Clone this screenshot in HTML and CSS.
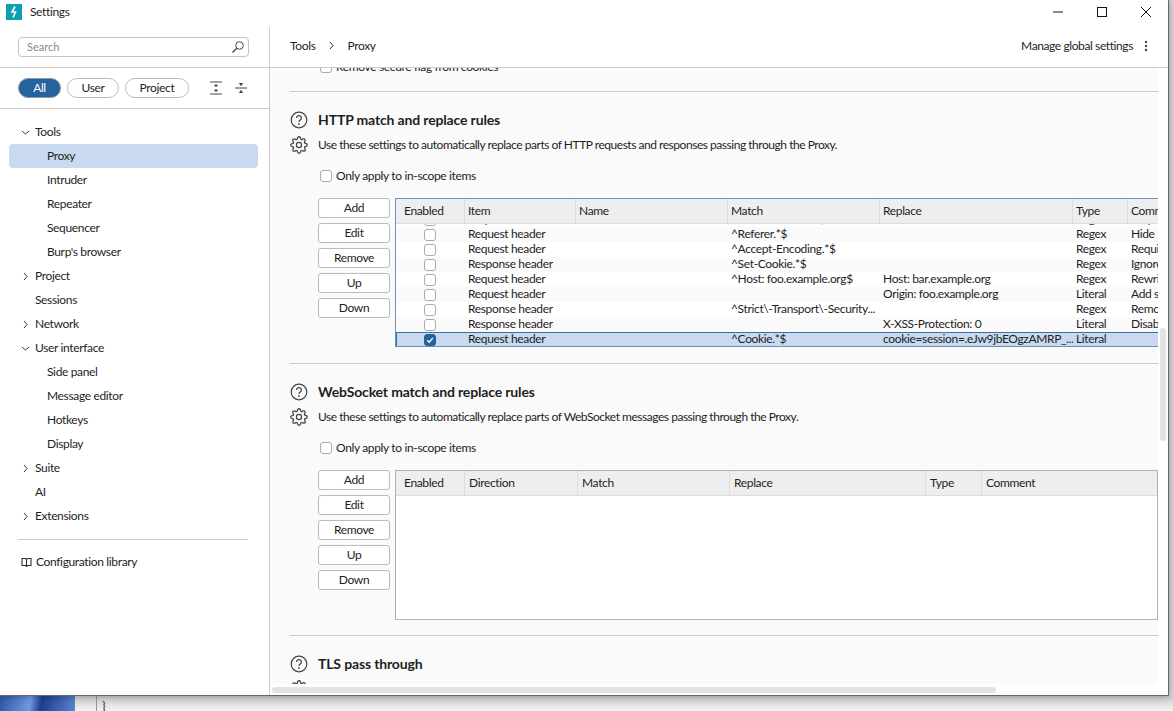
FILE: index.html
```html
<!DOCTYPE html>
<html lang="en">
<head>
<meta charset="utf-8">
<title>Settings</title>
<link rel="stylesheet" href="styles.css">
</head>
<body>
<svg class="defs" width="0" height="0"><defs>
  <g id="help"><circle cx="9" cy="9" r="7.8" stroke="#444" stroke-width="1.2" fill="none"/><path d="M6.6 7.1a2.4 2.4 0 1 1 3.6 2c-.8.5-1.2.9-1.2 1.7" stroke="#444" stroke-width="1.3" fill="none"/><circle cx="9" cy="13" r=".9" fill="#444"/></g>
  <g id="gear" fill="none" stroke="#444" stroke-width="1.7" stroke-linecap="round" stroke-linejoin="round"><circle cx="12" cy="12" r="3.4"/><path d="M19.4 15a1.65 1.65 0 0 0 .33 1.82l.06.06a2 2 0 0 1 0 2.83 2 2 0 0 1-2.83 0l-.06-.06a1.65 1.65 0 0 0-1.82-.33 1.65 1.65 0 0 0-1 1.51V21a2 2 0 0 1-2 2 2 2 0 0 1-2-2v-.09A1.65 1.65 0 0 0 9 19.4a1.65 1.65 0 0 0-1.82.33l-.06.06a2 2 0 0 1-2.83 0 2 2 0 0 1 0-2.83l.06-.06a1.65 1.65 0 0 0 .33-1.82 1.65 1.65 0 0 0-1.51-1H3a2 2 0 0 1-2-2 2 2 0 0 1 2-2h.09A1.65 1.65 0 0 0 4.6 9a1.65 1.65 0 0 0-.33-1.82l-.06-.06a2 2 0 0 1 0-2.83 2 2 0 0 1 2.83 0l.06.06a1.65 1.65 0 0 0 1.82.33H9a1.65 1.65 0 0 0 1-1.51V3a2 2 0 0 1 2-2 2 2 0 0 1 2 2v.09a1.65 1.65 0 0 0 1 1.51 1.65 1.65 0 0 0 1.82-.33l.06-.06a2 2 0 0 1 2.83 0 2 2 0 0 1 0 2.83l-.06.06a1.65 1.65 0 0 0-.33 1.82V9a1.65 1.65 0 0 0 1.51 1H21a2 2 0 0 1 2 2 2 2 0 0 1-2 2h-.09a1.65 1.65 0 0 0-1.51 1z"/></g>
  <path id="right" d="M3 1l3 3.5L3 8" stroke="#333" fill="none"/>
  <path id="down" d="M1 3l3.5 3L8 3" stroke="#333" fill="none"/>
</defs></svg>
<div class="window">
  <header class="titlebar">
    <svg class="logo" width="16" height="16" viewBox="0 0 16 16"><rect width="16" height="16" fill="#0e9fb1"/><path d="M9 2.500 6 8h3.500L7 13.500" stroke="#fff" stroke-width="1.600" fill="none"/></svg>
    <span class="title">Settings</span>
    <div class="winctl">
      <svg width="12" height="12" viewBox="0 0 12 12"><path d="M1 6h10" stroke="#111" fill="none"/></svg>
      <svg width="12" height="12" viewBox="0 0 12 12"><rect x="1.500" y="1.500" width="9" height="9" stroke="#111" fill="none"/></svg>
      <svg width="12" height="12" viewBox="0 0 12 12"><path d="M1 1l10 10M11 1 1 11" stroke="#111" fill="none"/></svg>
    </div>
  </header>
  <div class="body">
    <aside class="sidebar">
      <div class="searchwrap">
        <div class="search"><span>Search</span>
          <svg width="14" height="14" viewBox="0 0 14 14"><circle cx="8.500" cy="5.500" r="3.800" stroke="#444" fill="none"/><path d="M5.800 8.200 1.500 12.500" stroke="#444" stroke-width="1.300"/></svg>
        </div>
      </div>
      <div class="filters">
        <span class="pill active pill-all">All</span><span class="pill pill-user">User</span><span class="pill pill-project">Project</span>
        <svg class="expand" width="14" height="14" viewBox="0 0 14 14"><path d="M1 1h12M1 13h12" stroke="#444" stroke-width="1.200" fill="none"/><path d="M5.500 5 7 3.500 8.500 5zM5.500 9 7 10.500 8.500 9z" fill="#444" stroke="#444"/></svg>
        <svg class="collapse" width="14" height="14" viewBox="0 0 14 14"><path d="M1 7h12" stroke="#444" fill="none"/><path d="M5.500 2.500 7 4.500 8.500 2.500zM5.500 11.500 7 9.500 8.500 11.500z" fill="#444" stroke="#444"/></svg>
      </div>
      <nav class="tree">
        <div class="node"><svg class="chev" width="9" height="9" viewBox="0 0 9 9"><use href="#down"/></svg>Tools</div>
        <div class="leaf selected">Proxy</div>
        <div class="leaf">Intruder</div>
        <div class="leaf">Repeater</div>
        <div class="leaf">Sequencer</div>
        <div class="leaf">Burp's browser</div>
        <div class="node"><svg class="chev" width="9" height="9" viewBox="0 0 9 9"><use href="#right"/></svg>Project</div>
        <div class="leaf ai">Sessions</div>
        <div class="node"><svg class="chev" width="9" height="9" viewBox="0 0 9 9"><use href="#right"/></svg>Network</div>
        <div class="node"><svg class="chev" width="9" height="9" viewBox="0 0 9 9"><use href="#down"/></svg>User interface</div>
        <div class="leaf">Side panel</div>
        <div class="leaf">Message editor</div>
        <div class="leaf">Hotkeys</div>
        <div class="leaf">Display</div>
        <div class="node"><svg class="chev" width="9" height="9" viewBox="0 0 9 9"><use href="#right"/></svg>Suite</div>
        <div class="leaf ai">AI</div>
        <div class="node"><svg class="chev" width="9" height="9" viewBox="0 0 9 9"><use href="#right"/></svg>Extensions</div>
      </nav>
      <div class="library">
        <svg width="11" height="11" viewBox="0 0 11 11"><path d="M1 1.500h3.500l1 1 1-1H10v7H6.500l-1 1-1-1H1zM5.500 2.500v6.500" stroke="#333" stroke-width="1.100" fill="none"/></svg>
        Configuration library
      </div>
    </aside>
    <main class="main">
      <div class="crumbs">
        <span>Tools</span>
        <svg width="9" height="9" viewBox="0 0 9 9"><use href="#right"/></svg>
        <span class="crumb-last">Proxy</span>
        <span class="manage">Manage global settings</span>
        <svg class="kebab" width="4" height="12" viewBox="0 0 4 12"><circle cx="2" cy="2" r="1.200" fill="#444"/><circle cx="2" cy="6" r="1.200" fill="#444"/><circle cx="2" cy="10" r="1.200" fill="#444"/></svg>
      </div>
      <div class="scrollarea">
        <div class="content">
          <label class="check cut"><i class="box"></i>Remove secure flag from cookies</label>
          <hr class="rule first">
          <section class="section">
            <div class="headrow"><svg class="help" width="18" height="18" viewBox="0 0 18 18"><use href="#help"/></svg><h2>HTTP match and replace rules</h2></div>
            <div class="descrow"><svg class="gear" width="18" height="18" viewBox="0 0 24 24"><use href="#gear"/></svg><p>Use these settings to automatically replace parts of HTTP requests and responses passing through the Proxy.</p></div>
            <label class="check scope"><i class="box"></i>Only apply to in-scope items</label>
            <div class="tablerow">
              <div class="buttons"><button>Add</button><button>Edit</button><button>Remove</button><button>Up</button><button>Down</button></div>
              <div class="table http">
                <div class="thead"><span class="c1">Enabled</span><span class="c2">Item</span><span class="c3">Name</span><span class="c4">Match</span><span class="c5">Replace</span><span class="c6">Type</span><span class="c7">Comment</span></div>
                <div class="tbody">
                  <div class="tr"><span class="c1"><i class="box"></i></span><span class="c2">Request header</span><span class="c3"></span><span class="c4">^If-None-Match.*$</span><span class="c5"></span><span class="c6">Regex</span><span class="c7">Require non-cached</span></div>
                  <div class="tr"><span class="c1"><i class="box"></i></span><span class="c2">Request header</span><span class="c3"></span><span class="c4">^Referer.*$</span><span class="c5"></span><span class="c6">Regex</span><span class="c7">Hide Referer header</span></div>
                  <div class="tr"><span class="c1"><i class="box"></i></span><span class="c2">Request header</span><span class="c3"></span><span class="c4">^Accept-Encoding.*$</span><span class="c5"></span><span class="c6">Regex</span><span class="c7">Require non-compressed</span></div>
                  <div class="tr"><span class="c1"><i class="box"></i></span><span class="c2">Response header</span><span class="c3"></span><span class="c4">^Set-Cookie.*$</span><span class="c5"></span><span class="c6">Regex</span><span class="c7">Ignore cookies</span></div>
                  <div class="tr"><span class="c1"><i class="box"></i></span><span class="c2">Request header</span><span class="c3"></span><span class="c4">^Host: foo.example.org$</span><span class="c5">Host: bar.example.org</span><span class="c6">Regex</span><span class="c7">Rewrite Host header</span></div>
                  <div class="tr"><span class="c1"><i class="box"></i></span><span class="c2">Request header</span><span class="c3"></span><span class="c4"></span><span class="c5">Origin: foo.example.org</span><span class="c6">Literal</span><span class="c7">Add spoofed</span></div>
                  <div class="tr"><span class="c1"><i class="box"></i></span><span class="c2">Response header</span><span class="c3"></span><span class="c4">^Strict\-Transport\-Security...</span><span class="c5"></span><span class="c6">Regex</span><span class="c7">Remove HSTS</span></div>
                  <div class="tr"><span class="c1"><i class="box"></i></span><span class="c2">Response header</span><span class="c3"></span><span class="c4"></span><span class="c5">X-XSS-Protection: 0</span><span class="c6">Literal</span><span class="c7">Disable browser XSS</span></div>
                  <div class="tr sel"><span class="c1"><i class="box on"><svg width="10" height="10" viewBox="0 0 10 10"><path d="M2.200 5.200 4.200 7.200 7.800 3" stroke="#fff" stroke-width="1.300" fill="none"/></svg></i></span><span class="c2">Request header</span><span class="c3"></span><span class="c4">^Cookie.*$</span><span class="c5">cookie=session=.eJw9jbEOgzAMRP_...</span><span class="c6">Literal</span><span class="c7"></span></div>
                </div>
              </div>
            </div>
          </section>
          <hr class="rule">
          <section class="section">
            <div class="headrow"><svg class="help" width="18" height="18" viewBox="0 0 18 18"><use href="#help"/></svg><h2>WebSocket match and replace rules</h2></div>
            <div class="descrow"><svg class="gear" width="18" height="18" viewBox="0 0 24 24"><use href="#gear"/></svg><p>Use these settings to automatically replace parts of WebSocket messages passing through the Proxy.</p></div>
            <label class="check scope"><i class="box"></i>Only apply to in-scope items</label>
            <div class="tablerow">
              <div class="buttons"><button>Add</button><button>Edit</button><button>Remove</button><button>Up</button><button>Down</button></div>
              <div class="table ws">
                <div class="thead"><span class="w1">Enabled</span><span class="w2">Direction</span><span class="w3">Match</span><span class="w4">Replace</span><span class="w5">Type</span><span class="w6">Comment</span></div>
              </div>
            </div>
          </section>
          <hr class="rule">
          <section class="section">
            <div class="headrow"><svg class="help" width="18" height="18" viewBox="0 0 18 18"><use href="#help"/></svg><h2>TLS pass through</h2></div>
            <div class="descrow"><svg class="gear" width="18" height="18" viewBox="0 0 24 24"><use href="#gear"/></svg><p>Use these settings to specify destination web servers for which the Proxy will pass through TLS connections directly to the server.</p></div>
          </section>
        </div>
        <div class="vscroll"><i></i></div>
      </div>
      <div class="hscroll"><i></i></div>
    </main>
  </div>
</div>
<div class="backdrop"><div class="wall"></div><div class="gutter"></div><div class="code">}</div></div>
</body>
</html>
```
FILE: styles.css
```css
* { box-sizing: border-box; }
html, body { margin: 0; height: 711px; overflow: hidden; }
body { background: #d8d8d8; font: 12px Lato, "Noto Sans", sans-serif; letter-spacing: -0.35px; color: #1e1e1e; position: relative; }
.defs { position: absolute; }
.window { width: 1169px; height: 696px; background: #fff; border-right: 1px solid #666; border-bottom: 1px solid #666; display: flex; flex-direction: column; box-shadow: 0 0 8px rgba(0,0,0,.35); position: relative; z-index: 1; }
.titlebar { height: 27px; flex: none; display: flex; align-items: flex-start; padding: 4px 0 0 6px; }
.logo { flex: none; }
.title { margin-left: 8px; line-height: 16px; }
.winctl { margin-left: auto; display: flex; gap: 32px; padding: 2px 16px 0 0; }
.body { flex: 1; display: flex; min-height: 0; }
.sidebar { width: 270px; flex: none; border-right: 1px solid #ccc; display: flex; flex-direction: column; }
.searchwrap { height: 41px; border-bottom: 1px solid #ccc; padding: 10px 21px 0 18px; margin-right: -1px; }
.search { height: 20px; border: 1px solid #c4c4c4; border-radius: 4px; display: flex; align-items: center; justify-content: space-between; padding: 0 3px 0 8px; color: #888; font-size: 11px; line-height: 16px; letter-spacing: 0; }
.filters { height: 41px; border-bottom: 1px solid #ccc; display: flex; align-items: center; padding: 0 0 0 18px; }
.pill { height: 20px; border: 1px solid #bbb; border-radius: 10px; line-height: 18px; background: #fff; text-align: center; flex: none; }
.pill.active { background: #24639c; color: #fff; border-color: #8b9aa8; }
.pill-all { width: 43px; }
.pill-user { width: 52px; margin-left: 6px; }
.pill-project { width: 64px; margin-left: 6px; }
.expand { margin-left: 20px; }
.collapse { margin-left: 11px; }
.tree { padding: 11px 11px 0 9px; }
.node, .leaf { height: 24px; line-height: 24px; border-radius: 4px; }
.node { display: flex; align-items: center; padding-left: 12px; }
.chev { margin-right: 5px; }
.leaf { padding-left: 38px; }
.leaf.ai { padding-left: 26px; }
.leaf.selected { background: #c8d9f0; }
.library { margin: 11px 21px 0 18px; padding: 12px 0 0 3px; border-top: 1px solid #ccc; display: flex; align-items: center; gap: 4px; line-height: 20px; }
.main { flex: 1; min-width: 0; display: flex; flex-direction: column; }
.crumbs { height: 41px; flex: none; border-bottom: 1px solid #ccc; display: flex; align-items: center; padding: 0 20px 3px 20px; gap: 11px; }
.crumb-last { margin-left: 1px; }
.crumbs .manage { margin-left: auto; letter-spacing: -0.4px; }
.scrollarea { flex: 1; display: flex; min-height: 0; overflow: hidden; }
.content { flex: 1; min-width: 0; background: #fafafa; padding: 0 0 0 20px; overflow: hidden; }
.check { display: flex; align-items: center; gap: 4px; height: 16px; line-height: 14px; }
.box { display: inline-flex; align-items: center; justify-content: center; width: 12px; height: 12px; border: 1px solid #aaa; border-radius: 3px; background: #fff; flex: none; }
.box.on { background: #24639c; border-color: #24639c; }
.check.cut { margin: -9px 0 0 30px; }
.rule { border: 0; border-top: 1px solid #ccc; margin: 0; }
.rule.first { margin-top: 16px; }
.section { padding-top: 18px; }
.headrow { display: flex; align-items: center; gap: 10px; height: 20px; }
h2 { margin: 0 0 2px; font-size: 14px; font-weight: 700; letter-spacing: -0.15px; color: #1e1e1e; }
.descrow { display: flex; align-items: center; gap: 10px; margin-top: 5px; height: 20px; white-space: nowrap; }
.descrow p { margin: 0 0 2px; letter-spacing: -0.47px; }
.scope { margin: 13px 0 0 30px; }
.tablerow { display: flex; gap: 5px; margin: 14px 0 0 28px; align-items: flex-start; }
.buttons { width: 72px; flex: none; display: flex; flex-direction: column; gap: 5px; }
button { height: 20px; padding: 0 0 2px; font: 12px Lato, "Noto Sans", sans-serif; letter-spacing: -0.35px; color: #1e1e1e; background: #fff; border: 1px solid #bbb; border-radius: 3px; }
.table { width: 763px; border: 1px solid #6d93bd; background: #fff; overflow: hidden; margin-bottom: 16px; }
.table.http { height: 149px; border-right: 0; }
.table.ws { border-color: #b4b0b0; height: 150px; margin-bottom: 15px; }
.thead { height: 25px; display: flex; background: #eee; border-bottom: 1px solid #ddd; align-items: center; position: relative; z-index: 1; }
.thead span { height: 24px; line-height: 23px; padding-left: 3px; border-right: 1px solid #ddd; flex: none; white-space: nowrap; overflow: hidden; }
.thead span:first-child { padding-left: 8px; }
.ws .thead span { padding-left: 4px; }
.ws .thead span:first-child { padding-left: 8px; }
.tbody { margin-top: -12px; }
.tr { height: 15px; display: flex; line-height: 13px; }
.tr:nth-child(even) { background: #fafafa; }
.tr span { flex: none; padding-left: 3px; white-space: nowrap; overflow: hidden; }
.tr .c1 { display: flex; justify-content: center; align-items: center; padding: 0 2px 0 0; }
.tr.sel { background: #c8d9f0; box-shadow: inset 0 1px #3a6ea5, inset 1px 0 #3a6ea5; }
.c1 { width: 69px; }
.c2 { width: 111px; }
.c3 { width: 152px; }
.c4 { width: 152px; }
.c5 { width: 193px; }
.c6 { width: 55px; }
.c7 { width: 200px; }
.w1 { width: 69px; }
.w2 { width: 113px; }
.w3 { width: 152px; }
.w4 { width: 196px; }
.w5 { width: 56px; }
.w6 { width: 176px; }
.vscroll { width: 10px; flex: none; background: #fff; padding: 260px 2px 0 2px; }
.vscroll i { display: block; height: 113px; background: #e2e2e2; border-radius: 3px; }
.hscroll { height: 11px; flex: none; padding: 3px 172px 0 2px; background: #fff; }
.hscroll i { display: block; height: 6px; background: #e2e2e2; border-radius: 3px; }
.backdrop { height: 15px; display: flex; background: linear-gradient(#cfcfcf, #f2f2f2); }
.wall { width: 75px; background: linear-gradient(100deg, #2d55a8, #6f9ae0 40%, #1b3f8e 55%, #5a83d0); }
.gutter { width: 22px; border-right: 1px solid #999; }
.code { padding-left: 5px; line-height: 20px; }
```
